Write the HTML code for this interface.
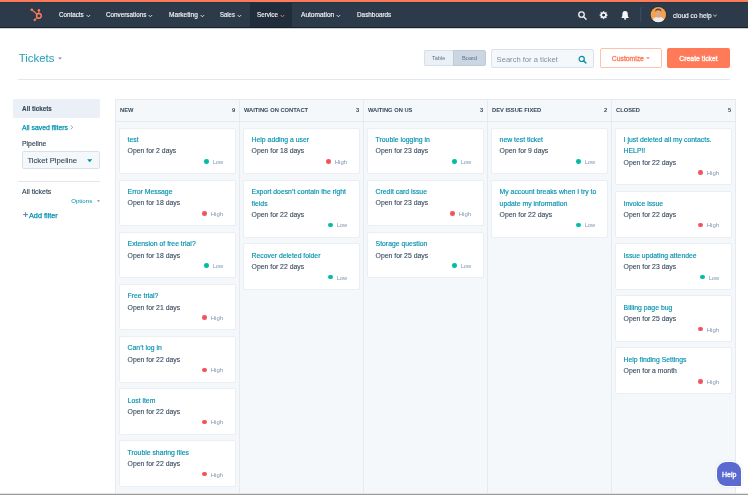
<!DOCTYPE html>
<html><head><meta charset="utf-8"><style>
html,body{margin:0;padding:0;width:748px;height:495px;overflow:hidden;background:#fff;}
body{position:relative;font-family:"Liberation Sans",sans-serif;}
#r{position:absolute;left:0;top:0;width:748px;height:495px;overflow:hidden;will-change:transform;background:#fff}
#r>div, #r>svg{position:absolute;}
.t{white-space:nowrap;}
</style></head><body><div id="r">
<div style="left:0.00px;top:0.00px;width:748.00px;height:2.00px;background:#ff7a59"></div>
<div style="left:0.00px;top:2.00px;width:748.00px;height:25.30px;background:#2c3a4a"></div>
<div style="left:249.50px;top:2.00px;width:42.60px;height:25.30px;background:#212d3b"></div>
<div style="left:0.00px;top:2.00px;width:748.00px;height:1.00px;background:#1f3344"></div>
<div style="left:0.00px;top:27.30px;width:748.00px;height:0.90px;background:#16202c"></div>
<div style="left:0.00px;top:28.20px;width:748.00px;height:1.20px;background:linear-gradient(#9aa3ad,#ffffff)"></div>
<svg style="position:absolute;left:28px;top:7px" width="17" height="17" viewBox="0 0 17 17">
<g fill="none" stroke="#ff7a59" stroke-width="1.5">
<circle cx="10.9" cy="8.8" r="2.35"/>
</g>
<g fill="none" stroke="#ff7a59" stroke-width="1.1">
<line x1="10.9" y1="3.2" x2="10.9" y2="6.5"/>
<line x1="3.8" y1="2.8" x2="9.2" y2="7.2"/>
<line x1="6.7" y1="13" x2="9.1" y2="10.6"/>
</g>
<g fill="#ff7a59">
<circle cx="3.8" cy="2.8" r="1.3"/>
<circle cx="10.9" cy="3.2" r="1.2"/>
<circle cx="6.7" cy="13" r="1.15"/>
</g></svg>
<div class="t" style="left:58.80px;top:11.72px;font-size:6.800px;line-height:6.800px;color:#f4f6f9;font-weight:400;-webkit-text-stroke-width:0.15px;transform:scaleX(0.9205);transform-origin:0 0;">Contacts</div>
<svg style="position:absolute;left:85.50px;top:13.6px" width="5" height="4" viewBox="0 0 5 4"><polyline points="0.7,1.1 2.4,2.8 4.1,1.1" fill="none" stroke="#dde3e9" stroke-width="1"/></svg>
<div class="t" style="left:105.90px;top:11.72px;font-size:6.800px;line-height:6.800px;color:#f4f6f9;font-weight:400;-webkit-text-stroke-width:0.15px;transform:scaleX(0.9295);transform-origin:0 0;">Conversations</div>
<svg style="position:absolute;left:147.90px;top:13.6px" width="5" height="4" viewBox="0 0 5 4"><polyline points="0.7,1.1 2.4,2.8 4.1,1.1" fill="none" stroke="#dde3e9" stroke-width="1"/></svg>
<div class="t" style="left:168.80px;top:11.72px;font-size:6.800px;line-height:6.800px;color:#f4f6f9;font-weight:400;-webkit-text-stroke-width:0.15px;transform:scaleX(0.9679);transform-origin:0 0;">Marketing</div>
<svg style="position:absolute;left:199.70px;top:13.6px" width="5" height="4" viewBox="0 0 5 4"><polyline points="0.7,1.1 2.4,2.8 4.1,1.1" fill="none" stroke="#dde3e9" stroke-width="1"/></svg>
<div class="t" style="left:220.20px;top:11.72px;font-size:6.800px;line-height:6.800px;color:#f4f6f9;font-weight:400;-webkit-text-stroke-width:0.15px;transform:scaleX(0.8761);transform-origin:0 0;">Sales</div>
<svg style="position:absolute;left:237.00px;top:13.6px" width="5" height="4" viewBox="0 0 5 4"><polyline points="0.7,1.1 2.4,2.8 4.1,1.1" fill="none" stroke="#dde3e9" stroke-width="1"/></svg>
<div class="t" style="left:257.20px;top:11.72px;font-size:6.800px;line-height:6.800px;color:#f4f6f9;font-weight:400;-webkit-text-stroke-width:0.15px;transform:scaleX(0.9216);transform-origin:0 0;">Service</div>
<svg style="position:absolute;left:279.60px;top:13.6px" width="5" height="4" viewBox="0 0 5 4"><polyline points="0.7,1.1 2.4,2.8 4.1,1.1" fill="none" stroke="#ff7a59" stroke-width="1"/></svg>
<div class="t" style="left:300.60px;top:11.72px;font-size:6.800px;line-height:6.800px;color:#f4f6f9;font-weight:400;-webkit-text-stroke-width:0.15px;transform:scaleX(0.9651);transform-origin:0 0;">Automation</div>
<svg style="position:absolute;left:336.30px;top:13.6px" width="5" height="4" viewBox="0 0 5 4"><polyline points="0.7,1.1 2.4,2.8 4.1,1.1" fill="none" stroke="#dde3e9" stroke-width="1"/></svg>
<div class="t" style="left:356.90px;top:11.72px;font-size:6.800px;line-height:6.800px;color:#f4f6f9;font-weight:400;-webkit-text-stroke-width:0.15px;transform:scaleX(0.9355);transform-origin:0 0;">Dashboards</div>
<svg style="position:absolute;left:576px;top:9px" width="13" height="13" viewBox="0 0 13 13">
<circle cx="5.5" cy="5.55" r="2.75" fill="none" stroke="#eef1f4" stroke-width="1.35"/>
<line x1="7.6" y1="7.7" x2="10.1" y2="10.3" stroke="#eef1f4" stroke-width="1.35" stroke-linecap="round"/></svg>
<svg style="position:absolute;left:0;top:0" width="748" height="30" viewBox="0 0 748 30">
<polygon points="603.60,11.00 604.71,12.42 606.50,12.20 606.28,13.99 607.70,15.10 606.28,16.21 606.50,18.00 604.71,17.78 603.60,19.20 602.49,17.78 600.70,18.00 600.92,16.21 599.50,15.10 600.92,13.99 600.70,12.20 602.49,12.42" fill="#f2f4f7" stroke="#f2f4f7" stroke-width="0.3" stroke-linejoin="round"/>
<circle cx="603.6" cy="15.1" r="1.45" fill="#1d2935"/>
<path d="M621.0,18.0 C622.2,17.2 622.4,16.2 622.4,14.2 C622.4,12.0 623.3,10.9 625.1,10.9 C626.9,10.9 627.8,12.0 627.8,14.2 C627.8,16.2 628.0,17.2 629.2,18.0 Z" fill="#f4f6f9"/>
<rect x="624.2" y="17.8" width="1.9" height="1.9" fill="#e6eaef"/>
<line x1="640.8" y1="7.4" x2="640.8" y2="21.9" stroke="#3f5268" stroke-width="1"/>
</svg>
<svg style="position:absolute;left:640px;top:0px" width="40" height="30" viewBox="640 0 40 30">
<defs><clipPath id="av"><circle cx="658.35" cy="14.65" r="7.7"/></clipPath></defs>
<circle cx="658.35" cy="14.65" r="8.3" fill="#1f2c3b"/>
<g clip-path="url(#av)">
<rect x="650" y="6" width="17" height="17" fill="#f5a24c"/>
<path d="M651.5,23 C652,19 654,17.4 656.5,17 L660.2,17 C662.7,17.4 664.7,19 665.2,23 Z" fill="#e9edf1"/>
<rect x="656.9" y="14.5" width="2.9" height="3" fill="#d49a76"/>
<ellipse cx="658.3" cy="13.2" rx="2.8" ry="3.8" fill="#dfa883"/>
<path d="M655.2,12.2 C655,9.6 656.4,8.6 658.3,8.6 C660.3,8.6 661.6,9.6 661.4,12.2 C661,10.9 660,10.3 658.3,10.3 C656.7,10.3 655.6,10.9 655.2,12.2 Z" fill="#6b3f25"/>
</g></svg>
<div class="t" style="left:673.10px;top:12.63px;font-size:6.900px;line-height:6.900px;color:#f4f6f9;font-weight:400;-webkit-text-stroke-width:0.15px;transform:scaleX(0.9518);transform-origin:0 0;">cloud co help</div>
<svg style="position:absolute;left:713.3px;top:14.2px" width="4" height="3.4" viewBox="0 0 4 3.4"><polyline points="0.4,0.6 2,2.5 3.6,0.6" fill="none" stroke="#cfd6de" stroke-width="0.9"/></svg>
<div class="t" style="left:18.70px;top:52.81px;font-size:11.400px;line-height:11.400px;color:#2a9fba;font-weight:400;-webkit-text-stroke-width:0.05px;">Tickets</div>
<svg style="position:absolute;left:58px;top:56.6px" width="4" height="3" viewBox="0 0 4 3"><polygon points="0.2,0.4 3.8,0.4 2,2.4" fill="#6c87a5"/></svg>
<div style="left:423.90px;top:50.10px;width:30.00px;height:15.70px;background:#eaf0f6;border:1px solid #d7dfe8;border-right:none;border-radius:2px 0 0 2px;box-sizing:border-box"></div>
<div style="left:453.30px;top:50.10px;width:32.40px;height:15.70px;background:#cbd6e2;border:1px solid #bccad9;border-radius:0 2px 2px 0;box-sizing:border-box"></div>
<div class="t" style="left:432.30px;top:55.66px;font-size:5.700px;line-height:5.700px;color:#56718f;font-weight:400;-webkit-text-stroke-width:0px;transform:scaleX(0.9832);transform-origin:0 0;">Table</div>
<div class="t" style="left:461.90px;top:55.66px;font-size:5.700px;line-height:5.700px;color:#56718f;font-weight:400;-webkit-text-stroke-width:0px;transform:scaleX(1.0061);transform-origin:0 0;">Board</div>
<div style="left:491.10px;top:49.20px;width:102.70px;height:18.50px;background:#f5f8fa;border:1px solid #dbe2ea;border-radius:2px;box-sizing:border-box"></div>
<div class="t" style="left:496.60px;top:56.04px;font-size:7.600px;line-height:7.600px;color:#7b8fa6;font-weight:400;-webkit-text-stroke-width:0px;">Search for a ticket</div>
<svg style="position:absolute;left:577px;top:54px" width="11" height="11" viewBox="0 0 11 11">
<circle cx="4.7" cy="4.9" r="2.6" fill="none" stroke="#0091ae" stroke-width="1.2"/>
<line x1="6.6" y1="6.8" x2="8.9" y2="9.0" stroke="#0091ae" stroke-width="1.4" stroke-linecap="round"/></svg>
<div style="left:599.90px;top:48.30px;width:62.00px;height:19.40px;background:#fff;border:1px solid #ffc0ae;border-radius:2px;box-sizing:border-box"></div>
<div class="t" style="left:611.80px;top:55.72px;font-size:6.800px;line-height:6.800px;color:#ff7a59;font-weight:400;-webkit-text-stroke-width:0.35px;">Customize</div>
<svg style="position:absolute;left:646px;top:57.3px" width="4" height="3" viewBox="0 0 4 3"><polygon points="0.3,0.3 3.7,0.3 2,2.2" fill="#ff7a59"/></svg>
<div style="left:667.30px;top:48.40px;width:62.40px;height:19.30px;background:#ff7a59;border-radius:2px"></div>
<div class="t" style="left:679.30px;top:55.67px;font-size:6.859px;line-height:6.859px;color:#ffffff;font-weight:400;-webkit-text-stroke-width:0.3px;">Create ticket</div>
<div style="left:18.10px;top:79.00px;width:711.70px;height:1.00px;background:#e3e8ee"></div>
<div style="left:13.00px;top:99.00px;width:87.00px;height:18.70px;background:#eaf0f6;border-radius:1.5px"></div>
<div class="t" style="left:22.10px;top:106.14px;font-size:6.300px;line-height:6.300px;color:#33475b;font-weight:700;-webkit-text-stroke-width:0.1px;">All tickets</div>
<div class="t" style="left:22.00px;top:124.68px;font-size:6.850px;line-height:6.850px;color:#0091ae;font-weight:400;-webkit-text-stroke-width:0.25px;">All saved filters</div>
<svg style="position:absolute;left:69.6px;top:125px" width="4" height="5" viewBox="0 0 4 5"><polyline points="0.6,0.4 2.8,2.4 0.6,4.4" fill="none" stroke="#6c87a5" stroke-width="0.7"/></svg>
<div class="t" style="left:22.00px;top:140.68px;font-size:6.850px;line-height:6.850px;color:#33475b;font-weight:400;-webkit-text-stroke-width:0.15px;">Pipeline</div>
<div style="left:22.30px;top:151.10px;width:77.30px;height:18.40px;background:#f5f8fa;border:1px solid #d9e1ea;border-radius:2px;box-sizing:border-box"></div>
<div class="t" style="left:27.40px;top:156.96px;font-size:7.700px;line-height:7.700px;color:#33475b;font-weight:400;-webkit-text-stroke-width:0.1px;">Ticket Pipeline</div>
<svg style="position:absolute;left:86.6px;top:158.8px" width="5.4" height="3.6" viewBox="0 0 5.4 3.6"><polygon points="0.2,0.3 5.2,0.3 2.7,3.3" fill="#0091ae"/></svg>
<div style="left:18.30px;top:181.00px;width:81.50px;height:0.90px;background:#e3e8ee"></div>
<div class="t" style="left:22.00px;top:188.59px;font-size:6.950px;line-height:6.950px;color:#33475b;font-weight:400;-webkit-text-stroke-width:0.15px;">All tickets</div>
<div class="t" style="left:71.20px;top:198.31px;font-size:6.100px;line-height:6.100px;color:#0091ae;font-weight:400;-webkit-text-stroke-width:0px;">Options</div>
<svg style="position:absolute;left:96.6px;top:199.6px" width="3" height="2.4" viewBox="0 0 3 2.4"><polygon points="0,0.2 3,0.2 1.5,2" fill="#6c87a5"/></svg>
<svg style="position:absolute;left:22.5px;top:212.3px" width="5.4" height="5.4" viewBox="0 0 5.4 5.4"><path d="M2.6,0.2 V5.0 M0.2,2.6 H5.0" stroke="#5f7c9c" stroke-width="1"/></svg>
<div class="t" style="left:28.70px;top:212.38px;font-size:7.200px;line-height:7.200px;color:#0091ae;font-weight:400;-webkit-text-stroke-width:0.25px;transform:scaleX(1.0137);transform-origin:0 0;">Add filter</div>
<div style="left:115.00px;top:99.00px;width:621.00px;height:400.00px;background:#f5f8fa;border:1px solid #e7ebf0;border-bottom:none;box-sizing:border-box"></div>
<div style="left:115.00px;top:121.00px;width:621.00px;height:1.00px;background:#e7ebf0"></div>
<div style="left:239.00px;top:99.00px;width:1.00px;height:400.00px;background:#e7ebf0"></div>
<div style="left:363.00px;top:99.00px;width:1.00px;height:400.00px;background:#e7ebf0"></div>
<div style="left:487.00px;top:99.00px;width:1.00px;height:400.00px;background:#e7ebf0"></div>
<div style="left:611.00px;top:99.00px;width:1.00px;height:400.00px;background:#e7ebf0"></div>
<div class="t" style="left:120.00px;top:107.61px;font-size:5.750px;line-height:5.750px;color:#33475b;font-weight:700;-webkit-text-stroke-width:0px;">NEW</div>
<div class="t" style="left:232.00px;top:107.61px;font-size:5.750px;line-height:5.750px;color:#33475b;font-weight:700;-webkit-text-stroke-width:0px;">9</div>
<div style="left:119.00px;top:127.60px;width:117.00px;height:46.60px;background:#fff;border:1px solid #ebeef3;border-radius:2px;box-sizing:border-box"></div>
<div class="t" style="left:127.60px;top:136.68px;font-size:6.850px;line-height:6.850px;color:#0091ae;font-weight:400;-webkit-text-stroke-width:0.15px;">test</div>
<div class="t" style="left:127.60px;top:147.68px;font-size:6.850px;line-height:6.850px;color:#33475b;font-weight:400;-webkit-text-stroke-width:0.1px;">Open for 2 days</div>
<div class="t" style="left:212.72px;top:159.70px;font-size:5.650px;line-height:5.650px;color:#7d95b0;font-weight:400;-webkit-text-stroke-width:0px;">Low</div>
<div style="left:203.92px;top:159.15px;width:4.7px;height:4.7px;border-radius:50%;background:#00bda5"></div>
<div style="left:119.00px;top:179.70px;width:117.00px;height:46.60px;background:#fff;border:1px solid #ebeef3;border-radius:2px;box-sizing:border-box"></div>
<div class="t" style="left:127.60px;top:188.68px;font-size:6.850px;line-height:6.850px;color:#0091ae;font-weight:400;-webkit-text-stroke-width:0.15px;">Error Message</div>
<div class="t" style="left:127.60px;top:199.68px;font-size:6.850px;line-height:6.850px;color:#33475b;font-weight:400;-webkit-text-stroke-width:0.1px;">Open for 18 days</div>
<div class="t" style="left:210.76px;top:211.40px;font-size:6.000px;line-height:6.000px;color:#7d95b0;font-weight:400;-webkit-text-stroke-width:0px;">High</div>
<div style="left:201.96px;top:211.25px;width:4.7px;height:4.7px;border-radius:50%;background:#f2545b"></div>
<div style="left:119.00px;top:231.80px;width:117.00px;height:46.60px;background:#fff;border:1px solid #ebeef3;border-radius:2px;box-sizing:border-box"></div>
<div class="t" style="left:127.60px;top:240.68px;font-size:6.850px;line-height:6.850px;color:#0091ae;font-weight:400;-webkit-text-stroke-width:0.15px;">Extension of free trial?</div>
<div class="t" style="left:127.60px;top:252.68px;font-size:6.850px;line-height:6.850px;color:#33475b;font-weight:400;-webkit-text-stroke-width:0.1px;">Open for 18 days</div>
<div class="t" style="left:212.72px;top:263.70px;font-size:5.650px;line-height:5.650px;color:#7d95b0;font-weight:400;-webkit-text-stroke-width:0px;">Low</div>
<div style="left:203.92px;top:263.35px;width:4.7px;height:4.7px;border-radius:50%;background:#00bda5"></div>
<div style="left:119.00px;top:283.90px;width:117.00px;height:46.60px;background:#fff;border:1px solid #ebeef3;border-radius:2px;box-sizing:border-box"></div>
<div class="t" style="left:127.60px;top:292.68px;font-size:6.850px;line-height:6.850px;color:#0091ae;font-weight:400;-webkit-text-stroke-width:0.15px;">Free trial?</div>
<div class="t" style="left:127.60px;top:304.68px;font-size:6.850px;line-height:6.850px;color:#33475b;font-weight:400;-webkit-text-stroke-width:0.1px;">Open for 21 days</div>
<div class="t" style="left:210.76px;top:315.40px;font-size:6.000px;line-height:6.000px;color:#7d95b0;font-weight:400;-webkit-text-stroke-width:0px;">High</div>
<div style="left:201.96px;top:315.45px;width:4.7px;height:4.7px;border-radius:50%;background:#f2545b"></div>
<div style="left:119.00px;top:336.00px;width:117.00px;height:46.60px;background:#fff;border:1px solid #ebeef3;border-radius:2px;box-sizing:border-box"></div>
<div class="t" style="left:127.60px;top:344.68px;font-size:6.850px;line-height:6.850px;color:#0091ae;font-weight:400;-webkit-text-stroke-width:0.15px;">Can’t log in</div>
<div class="t" style="left:127.60px;top:356.68px;font-size:6.850px;line-height:6.850px;color:#33475b;font-weight:400;-webkit-text-stroke-width:0.1px;">Open for 22 days</div>
<div class="t" style="left:210.76px;top:367.40px;font-size:6.000px;line-height:6.000px;color:#7d95b0;font-weight:400;-webkit-text-stroke-width:0px;">High</div>
<div style="left:201.96px;top:367.55px;width:4.7px;height:4.7px;border-radius:50%;background:#f2545b"></div>
<div style="left:119.00px;top:388.10px;width:117.00px;height:46.60px;background:#fff;border:1px solid #ebeef3;border-radius:2px;box-sizing:border-box"></div>
<div class="t" style="left:127.60px;top:397.68px;font-size:6.850px;line-height:6.850px;color:#0091ae;font-weight:400;-webkit-text-stroke-width:0.15px;">Lost item</div>
<div class="t" style="left:127.60px;top:408.68px;font-size:6.850px;line-height:6.850px;color:#33475b;font-weight:400;-webkit-text-stroke-width:0.1px;">Open for 22 days</div>
<div class="t" style="left:210.76px;top:419.40px;font-size:6.000px;line-height:6.000px;color:#7d95b0;font-weight:400;-webkit-text-stroke-width:0px;">High</div>
<div style="left:201.96px;top:419.65px;width:4.7px;height:4.7px;border-radius:50%;background:#f2545b"></div>
<div style="left:119.00px;top:440.20px;width:117.00px;height:46.60px;background:#fff;border:1px solid #ebeef3;border-radius:2px;box-sizing:border-box"></div>
<div class="t" style="left:127.60px;top:449.68px;font-size:6.850px;line-height:6.850px;color:#0091ae;font-weight:400;-webkit-text-stroke-width:0.15px;">Trouble sharing files</div>
<div class="t" style="left:127.60px;top:460.68px;font-size:6.850px;line-height:6.850px;color:#33475b;font-weight:400;-webkit-text-stroke-width:0.1px;">Open for 22 days</div>
<div class="t" style="left:210.76px;top:472.40px;font-size:6.000px;line-height:6.000px;color:#7d95b0;font-weight:400;-webkit-text-stroke-width:0px;">High</div>
<div style="left:201.96px;top:471.75px;width:4.7px;height:4.7px;border-radius:50%;background:#f2545b"></div>
<div class="t" style="left:244.00px;top:107.61px;font-size:5.750px;line-height:5.750px;color:#33475b;font-weight:700;-webkit-text-stroke-width:0px;">WAITING ON CONTACT</div>
<div class="t" style="left:356.00px;top:107.61px;font-size:5.750px;line-height:5.750px;color:#33475b;font-weight:700;-webkit-text-stroke-width:0px;">3</div>
<div style="left:243.00px;top:127.60px;width:117.00px;height:46.60px;background:#fff;border:1px solid #ebeef3;border-radius:2px;box-sizing:border-box"></div>
<div class="t" style="left:251.60px;top:136.68px;font-size:6.850px;line-height:6.850px;color:#0091ae;font-weight:400;-webkit-text-stroke-width:0.15px;">Help adding a user</div>
<div class="t" style="left:251.60px;top:147.68px;font-size:6.850px;line-height:6.850px;color:#33475b;font-weight:400;-webkit-text-stroke-width:0.1px;">Open for 18 days</div>
<div class="t" style="left:334.76px;top:159.40px;font-size:6.000px;line-height:6.000px;color:#7d95b0;font-weight:400;-webkit-text-stroke-width:0px;">High</div>
<div style="left:325.96px;top:159.15px;width:4.7px;height:4.7px;border-radius:50%;background:#f2545b"></div>
<div style="left:243.00px;top:179.70px;width:117.00px;height:57.90px;background:#fff;border:1px solid #ebeef3;border-radius:2px;box-sizing:border-box"></div>
<div class="t" style="left:251.60px;top:188.68px;font-size:6.850px;line-height:6.850px;color:#0091ae;font-weight:400;-webkit-text-stroke-width:0.15px;">Export doesn’t contain the right</div>
<div class="t" style="left:251.60px;top:200.68px;font-size:6.850px;line-height:6.850px;color:#0091ae;font-weight:400;-webkit-text-stroke-width:0.15px;">fields</div>
<div class="t" style="left:251.60px;top:211.68px;font-size:6.850px;line-height:6.850px;color:#33475b;font-weight:400;-webkit-text-stroke-width:0.1px;">Open for 22 days</div>
<div class="t" style="left:336.72px;top:222.70px;font-size:5.650px;line-height:5.650px;color:#7d95b0;font-weight:400;-webkit-text-stroke-width:0px;">Low</div>
<div style="left:327.92px;top:222.55px;width:4.7px;height:4.7px;border-radius:50%;background:#00bda5"></div>
<div style="left:243.00px;top:243.10px;width:117.00px;height:46.60px;background:#fff;border:1px solid #ebeef3;border-radius:2px;box-sizing:border-box"></div>
<div class="t" style="left:251.60px;top:252.68px;font-size:6.850px;line-height:6.850px;color:#0091ae;font-weight:400;-webkit-text-stroke-width:0.15px;">Recover deleted folder</div>
<div class="t" style="left:251.60px;top:263.68px;font-size:6.850px;line-height:6.850px;color:#33475b;font-weight:400;-webkit-text-stroke-width:0.1px;">Open for 22 days</div>
<div class="t" style="left:336.72px;top:275.70px;font-size:5.650px;line-height:5.650px;color:#7d95b0;font-weight:400;-webkit-text-stroke-width:0px;">Low</div>
<div style="left:327.92px;top:274.65px;width:4.7px;height:4.7px;border-radius:50%;background:#00bda5"></div>
<div class="t" style="left:368.00px;top:107.61px;font-size:5.750px;line-height:5.750px;color:#33475b;font-weight:700;-webkit-text-stroke-width:0px;">WAITING ON US</div>
<div class="t" style="left:480.00px;top:107.61px;font-size:5.750px;line-height:5.750px;color:#33475b;font-weight:700;-webkit-text-stroke-width:0px;">3</div>
<div style="left:367.00px;top:127.60px;width:117.00px;height:46.60px;background:#fff;border:1px solid #ebeef3;border-radius:2px;box-sizing:border-box"></div>
<div class="t" style="left:375.60px;top:136.68px;font-size:6.850px;line-height:6.850px;color:#0091ae;font-weight:400;-webkit-text-stroke-width:0.15px;">Trouble logging in</div>
<div class="t" style="left:375.60px;top:147.68px;font-size:6.850px;line-height:6.850px;color:#33475b;font-weight:400;-webkit-text-stroke-width:0.1px;">Open for 23 days</div>
<div class="t" style="left:460.72px;top:159.70px;font-size:5.650px;line-height:5.650px;color:#7d95b0;font-weight:400;-webkit-text-stroke-width:0px;">Low</div>
<div style="left:451.92px;top:159.15px;width:4.7px;height:4.7px;border-radius:50%;background:#00bda5"></div>
<div style="left:367.00px;top:179.70px;width:117.00px;height:46.60px;background:#fff;border:1px solid #ebeef3;border-radius:2px;box-sizing:border-box"></div>
<div class="t" style="left:375.60px;top:188.68px;font-size:6.850px;line-height:6.850px;color:#0091ae;font-weight:400;-webkit-text-stroke-width:0.15px;">Credit card issue</div>
<div class="t" style="left:375.60px;top:199.68px;font-size:6.850px;line-height:6.850px;color:#33475b;font-weight:400;-webkit-text-stroke-width:0.1px;">Open for 23 days</div>
<div class="t" style="left:458.76px;top:211.40px;font-size:6.000px;line-height:6.000px;color:#7d95b0;font-weight:400;-webkit-text-stroke-width:0px;">High</div>
<div style="left:449.96px;top:211.25px;width:4.7px;height:4.7px;border-radius:50%;background:#f2545b"></div>
<div style="left:367.00px;top:231.80px;width:117.00px;height:46.60px;background:#fff;border:1px solid #ebeef3;border-radius:2px;box-sizing:border-box"></div>
<div class="t" style="left:375.60px;top:240.68px;font-size:6.850px;line-height:6.850px;color:#0091ae;font-weight:400;-webkit-text-stroke-width:0.15px;">Storage question</div>
<div class="t" style="left:375.60px;top:252.68px;font-size:6.850px;line-height:6.850px;color:#33475b;font-weight:400;-webkit-text-stroke-width:0.1px;">Open for 25 days</div>
<div class="t" style="left:460.72px;top:263.70px;font-size:5.650px;line-height:5.650px;color:#7d95b0;font-weight:400;-webkit-text-stroke-width:0px;">Low</div>
<div style="left:451.92px;top:263.35px;width:4.7px;height:4.7px;border-radius:50%;background:#00bda5"></div>
<div class="t" style="left:492.00px;top:107.61px;font-size:5.750px;line-height:5.750px;color:#33475b;font-weight:700;-webkit-text-stroke-width:0px;">DEV ISSUE FIXED</div>
<div class="t" style="left:604.00px;top:107.61px;font-size:5.750px;line-height:5.750px;color:#33475b;font-weight:700;-webkit-text-stroke-width:0px;">2</div>
<div style="left:491.00px;top:127.60px;width:117.00px;height:46.60px;background:#fff;border:1px solid #ebeef3;border-radius:2px;box-sizing:border-box"></div>
<div class="t" style="left:499.60px;top:136.68px;font-size:6.850px;line-height:6.850px;color:#0091ae;font-weight:400;-webkit-text-stroke-width:0.15px;">new test ticket</div>
<div class="t" style="left:499.60px;top:147.68px;font-size:6.850px;line-height:6.850px;color:#33475b;font-weight:400;-webkit-text-stroke-width:0.1px;">Open for 9 days</div>
<div class="t" style="left:584.72px;top:159.70px;font-size:5.650px;line-height:5.650px;color:#7d95b0;font-weight:400;-webkit-text-stroke-width:0px;">Low</div>
<div style="left:575.92px;top:159.15px;width:4.7px;height:4.7px;border-radius:50%;background:#00bda5"></div>
<div style="left:491.00px;top:179.70px;width:117.00px;height:57.90px;background:#fff;border:1px solid #ebeef3;border-radius:2px;box-sizing:border-box"></div>
<div class="t" style="left:499.60px;top:188.68px;font-size:6.850px;line-height:6.850px;color:#0091ae;font-weight:400;-webkit-text-stroke-width:0.15px;">My account breaks when I try to</div>
<div class="t" style="left:499.60px;top:200.68px;font-size:6.850px;line-height:6.850px;color:#0091ae;font-weight:400;-webkit-text-stroke-width:0.15px;">update my information</div>
<div class="t" style="left:499.60px;top:211.68px;font-size:6.850px;line-height:6.850px;color:#33475b;font-weight:400;-webkit-text-stroke-width:0.1px;">Open for 22 days</div>
<div class="t" style="left:584.72px;top:222.70px;font-size:5.650px;line-height:5.650px;color:#7d95b0;font-weight:400;-webkit-text-stroke-width:0px;">Low</div>
<div style="left:575.92px;top:222.55px;width:4.7px;height:4.7px;border-radius:50%;background:#00bda5"></div>
<div class="t" style="left:616.00px;top:107.61px;font-size:5.750px;line-height:5.750px;color:#33475b;font-weight:700;-webkit-text-stroke-width:0px;">CLOSED</div>
<div class="t" style="left:728.00px;top:107.61px;font-size:5.750px;line-height:5.750px;color:#33475b;font-weight:700;-webkit-text-stroke-width:0px;">5</div>
<div style="left:615.00px;top:127.60px;width:117.00px;height:57.90px;background:#fff;border:1px solid #ebeef3;border-radius:2px;box-sizing:border-box"></div>
<div class="t" style="left:623.60px;top:136.68px;font-size:6.850px;line-height:6.850px;color:#0091ae;font-weight:400;-webkit-text-stroke-width:0.15px;">I just deleted all my contacts.</div>
<div class="t" style="left:623.60px;top:147.68px;font-size:6.850px;line-height:6.850px;color:#0091ae;font-weight:400;-webkit-text-stroke-width:0.15px;">HELP!!</div>
<div class="t" style="left:623.60px;top:159.68px;font-size:6.850px;line-height:6.850px;color:#33475b;font-weight:400;-webkit-text-stroke-width:0.1px;">Open for 22 days</div>
<div class="t" style="left:706.76px;top:170.40px;font-size:6.000px;line-height:6.000px;color:#7d95b0;font-weight:400;-webkit-text-stroke-width:0px;">High</div>
<div style="left:697.96px;top:170.45px;width:4.7px;height:4.7px;border-radius:50%;background:#f2545b"></div>
<div style="left:615.00px;top:191.00px;width:117.00px;height:46.60px;background:#fff;border:1px solid #ebeef3;border-radius:2px;box-sizing:border-box"></div>
<div class="t" style="left:623.60px;top:200.68px;font-size:6.850px;line-height:6.850px;color:#0091ae;font-weight:400;-webkit-text-stroke-width:0.15px;">Invoice issue</div>
<div class="t" style="left:623.60px;top:211.68px;font-size:6.850px;line-height:6.850px;color:#33475b;font-weight:400;-webkit-text-stroke-width:0.1px;">Open for 22 days</div>
<div class="t" style="left:706.76px;top:222.40px;font-size:6.000px;line-height:6.000px;color:#7d95b0;font-weight:400;-webkit-text-stroke-width:0px;">High</div>
<div style="left:697.96px;top:222.55px;width:4.7px;height:4.7px;border-radius:50%;background:#f2545b"></div>
<div style="left:615.00px;top:243.10px;width:117.00px;height:46.60px;background:#fff;border:1px solid #ebeef3;border-radius:2px;box-sizing:border-box"></div>
<div class="t" style="left:623.60px;top:252.68px;font-size:6.850px;line-height:6.850px;color:#0091ae;font-weight:400;-webkit-text-stroke-width:0.15px;">Issue updating attendee</div>
<div class="t" style="left:623.60px;top:263.68px;font-size:6.850px;line-height:6.850px;color:#33475b;font-weight:400;-webkit-text-stroke-width:0.1px;">Open for 23 days</div>
<div class="t" style="left:708.72px;top:275.70px;font-size:5.650px;line-height:5.650px;color:#7d95b0;font-weight:400;-webkit-text-stroke-width:0px;">Low</div>
<div style="left:699.92px;top:274.65px;width:4.7px;height:4.7px;border-radius:50%;background:#00bda5"></div>
<div style="left:615.00px;top:295.20px;width:117.00px;height:46.60px;background:#fff;border:1px solid #ebeef3;border-radius:2px;box-sizing:border-box"></div>
<div class="t" style="left:623.60px;top:304.68px;font-size:6.850px;line-height:6.850px;color:#0091ae;font-weight:400;-webkit-text-stroke-width:0.15px;">Billing page bug</div>
<div class="t" style="left:623.60px;top:315.68px;font-size:6.850px;line-height:6.850px;color:#33475b;font-weight:400;-webkit-text-stroke-width:0.1px;">Open for 25 days</div>
<div class="t" style="left:706.76px;top:327.40px;font-size:6.000px;line-height:6.000px;color:#7d95b0;font-weight:400;-webkit-text-stroke-width:0px;">High</div>
<div style="left:697.96px;top:326.75px;width:4.7px;height:4.7px;border-radius:50%;background:#f2545b"></div>
<div style="left:615.00px;top:347.30px;width:117.00px;height:46.60px;background:#fff;border:1px solid #ebeef3;border-radius:2px;box-sizing:border-box"></div>
<div class="t" style="left:623.60px;top:356.68px;font-size:6.850px;line-height:6.850px;color:#0091ae;font-weight:400;-webkit-text-stroke-width:0.15px;">Help finding Settings</div>
<div class="t" style="left:623.60px;top:367.68px;font-size:6.850px;line-height:6.850px;color:#33475b;font-weight:400;-webkit-text-stroke-width:0.1px;">Open for a month</div>
<div class="t" style="left:706.76px;top:379.40px;font-size:6.000px;line-height:6.000px;color:#7d95b0;font-weight:400;-webkit-text-stroke-width:0px;">High</div>
<div style="left:697.96px;top:378.85px;width:4.7px;height:4.7px;border-radius:50%;background:#f2545b"></div>
<div style="left:717.1px;top:461.8px;width:23.8px;height:24.6px;background:#5b6ad1;border-radius:9px 9px 0 9px;box-shadow:0 0 0 1px #fff, 0 0 3px 1px rgba(0,0,0,.08)"></div>
<div class="t" style="left:721.80px;top:471.98px;font-size:6.500px;line-height:6.500px;color:#ffffff;font-weight:400;-webkit-text-stroke-width:0.3px;transform:scaleX(1.0770);transform-origin:0 0;">Help</div>
<div style="left:0.00px;top:493.00px;width:748.00px;height:1.00px;background:#e2e2e2"></div>
<div style="left:0.00px;top:494.00px;width:748.00px;height:1.00px;background:#9c9c9c"></div>
</div></body></html>
